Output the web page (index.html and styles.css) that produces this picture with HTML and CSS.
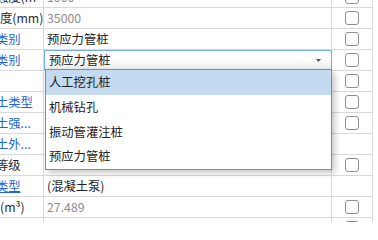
FILE: index.html
```html
<!DOCTYPE html>
<html lang="zh">
<head>
<meta charset="utf-8">
<title>属性表</title>
<link rel="stylesheet" href="styles.css">
</head>
<body>
<div class="sheet">
  <div class="row"><div class="lbl dark clip">强度(m</div><div class="val gray">1000</div><div class="chk"><span class="box"></span></div></div>
  <div class="row"><div class="lbl dark">度(mm)</div><div class="val gray">35000</div><div class="chk"><span class="box"></span></div></div>
  <div class="row"><div class="lbl blue clip">类别</div><div class="val">预应力管桩</div><div class="chk"><span class="box"></span></div></div>
  <div class="row">
    <div class="lbl blue clip">类别</div>
    <div class="val editing">
      <div class="select">
        <span class="sel-text">预应力管桩</span>
        <svg class="arrow" width="5" height="3" viewBox="0 0 5 3"><path d="M0 0H5L2.5 3Z" fill="#555"/></svg>
      </div>
      <ul class="list">
        <li class="on">人工挖孔桩</li>
        <li>机械钻孔</li>
        <li>振动管灌注桩</li>
        <li>预应力管桩</li>
      </ul>
    </div>
    <div class="chk"><span class="box"></span></div>
  </div>
  <div class="row"><div class="lbl"></div><div class="val"></div><div class="chk"><span class="box"></span></div></div>
  <div class="row"><div class="lbl blue clip">土类型</div><div class="val"></div><div class="chk"><span class="box"></span></div></div>
  <div class="row"><div class="lbl blue clip">土强...</div><div class="val"></div><div class="chk"><span class="box"></span></div></div>
  <div class="row"><div class="lbl blue clip">土外...</div><div class="val"></div><div class="chk"></div></div>
  <div class="row"><div class="lbl dark clip">等级</div><div class="val">C30</div><div class="chk"><span class="box"></span></div></div>
  <div class="row"><div class="lbl blue link clip">类型</div><div class="val">(混凝土泵)</div><div class="chk"></div></div>
  <div class="row"><div class="lbl dark">(m³)</div><div class="val gray">27.489</div><div class="chk"><span class="box"></span></div></div>
  <div class="row"><div class="lbl"></div><div class="val"></div><div class="chk"><span class="box"></span></div></div>
</div>
</body>
</html>
```
FILE: styles.css
```css
html, body {
  margin: 0;
  padding: 0;
  background: #fff;
  overflow: hidden;
}
body {
  width: 378px;
  height: 222px;
  font-family: "Noto Sans CJK SC", "Noto Sans", sans-serif;
  font-size: 12.3px;
  color: #222;
}
.sheet {
  width: 373px;
  margin-top: -13px;
}
.row {
  display: grid;
  grid-template-columns: 44px 288px 41px;
  height: 21px;
  border-bottom: 1px solid #d9d9d9;
  box-sizing: border-box;
}
.row > div {
  box-sizing: border-box;
  border-right: 1px solid #d9d9d9;
  height: 20px;
  line-height: 20px;
  white-space: nowrap;
}
.lbl {
  overflow: hidden;
  text-overflow: clip;
}
.clip { text-indent: -4px; }
.blue { color: #2364d2; }
.dark { color: #23283a; }
.link { text-decoration: underline; }
.val {
  padding-left: 3px;
  overflow: visible;
}
.gray { color: #8c8c8c; }
.chk {
  display: flex;
  align-items: center;
  justify-content: center;
}
.box {
  width: 14px;
  height: 14px;
  box-sizing: border-box;
  border: 1px solid #8e8e8e;
  border-radius: 3px;
  background: #fff;
}
.editing {
  position: relative;
  padding-left: 0 !important;
}
.select {
  position: relative;
  width: 288px;
  height: 20px;
  box-sizing: border-box;
  border: 1px solid #72aae4;
  background: linear-gradient(#ffffff 40%, #ededed);
  display: flex;
  align-items: center;
  justify-content: space-between;
  padding: 0 10px 0 4px;
  line-height: 18px;
  z-index: 5;
}
.arrow {
  display: block;
}
.list {
  position: absolute;
  top: 19px;
  left: 1px;
  width: 287px;
  margin: 0;
  padding: 0;
  list-style: none;
  box-sizing: border-box;
  border: 1px solid #3aa2d4;
  background: #fff;
  box-shadow: 3px 3px 6px rgba(0, 0, 0, 0.22);
  z-index: 10;
}
.list li {
  height: 24.75px;
  line-height: 24.75px;
  padding-left: 3px;
  color: #222;
}
.list li.on {
  background: #c3daf0;
}
```
